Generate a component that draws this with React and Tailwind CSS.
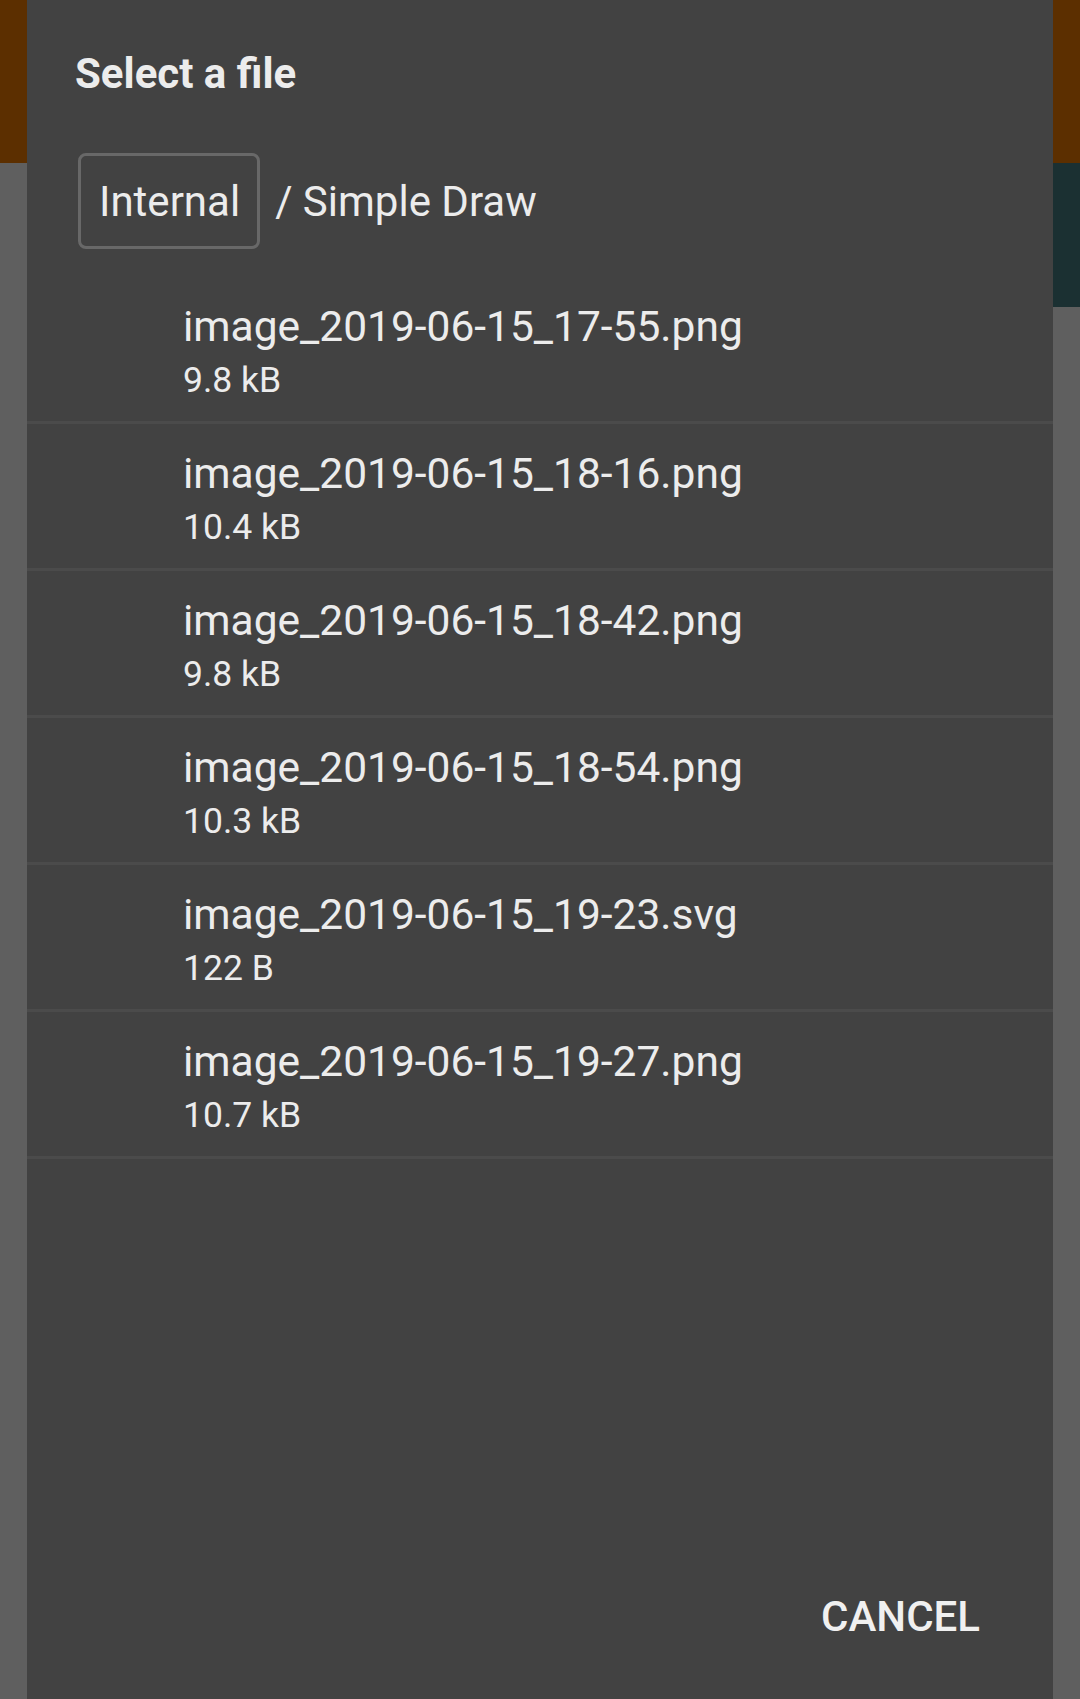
import React from "react";

const files = [
  { name: "image_2019-06-15_17-55.png", size: "9.8 kB" },
  { name: "image_2019-06-15_18-16.png", size: "10.4 kB" },
  { name: "image_2019-06-15_18-42.png", size: "9.8 kB" },
  { name: "image_2019-06-15_18-54.png", size: "10.3 kB" },
  { name: "image_2019-06-15_19-23.svg", size: "122 B" },
  { name: "image_2019-06-15_19-27.png", size: "10.7 kB" },
];

const App = () => {
  return (
    <div
      className="relative w-[1080px] h-[1699px] overflow-hidden bg-[#5f5f5f]"
      style={{ fontFamily: "Roboto, 'Noto Sans', sans-serif" }}
    >
      {/* app behind the dialog */}
      <div className="h-[163px] bg-[#5c2f00]" />
      <div className="flex">
        <div className="flex-1" />
        <div className="w-[600px] h-[144px] bg-[#1b3032]" />
      </div>

      {/* dialog */}
      <div className="absolute top-0 bottom-0 left-[27px] w-[1026px] bg-[#424242] flex flex-col text-[#ececec]">
        <h2 className="pl-[48px] pt-[49px] text-[42px] leading-[50px] font-bold">
          Select a file
        </h2>

        <div className="flex items-center pl-[51px] mt-[54px]">
          <div className="h-[96px] pl-[18px] pr-[17px] pt-[2px] flex items-center border-[3px] border-[#686868] rounded-[8px]">
            <span className="text-[42px] leading-[50px]">Internal</span>
          </div>
          <span className="ml-[15px] pt-[2px] text-[42px] leading-[50px]">/ Simple Draw</span>
        </div>

        <div className="mt-[28px]">
          {files.map((f) => (
            <div
              key={f.name}
              className="h-[147px] border-b-[3px] border-[#4b4b4b] pl-[156px] pt-[25px]"
            >
              <div className="text-[42.5px] leading-[50px]">{f.name}</div>
              <div className="mt-[7px] text-[35.5px] leading-[42px]">{f.size}</div>
            </div>
          ))}
        </div>

        <div className="mt-auto flex justify-end pr-[73px] pb-[57px]">
          <button className="text-[42px] leading-[50px] font-medium text-[#f0f0f0]">
            CANCEL
          </button>
        </div>
      </div>
    </div>
  );
};

export default App;
